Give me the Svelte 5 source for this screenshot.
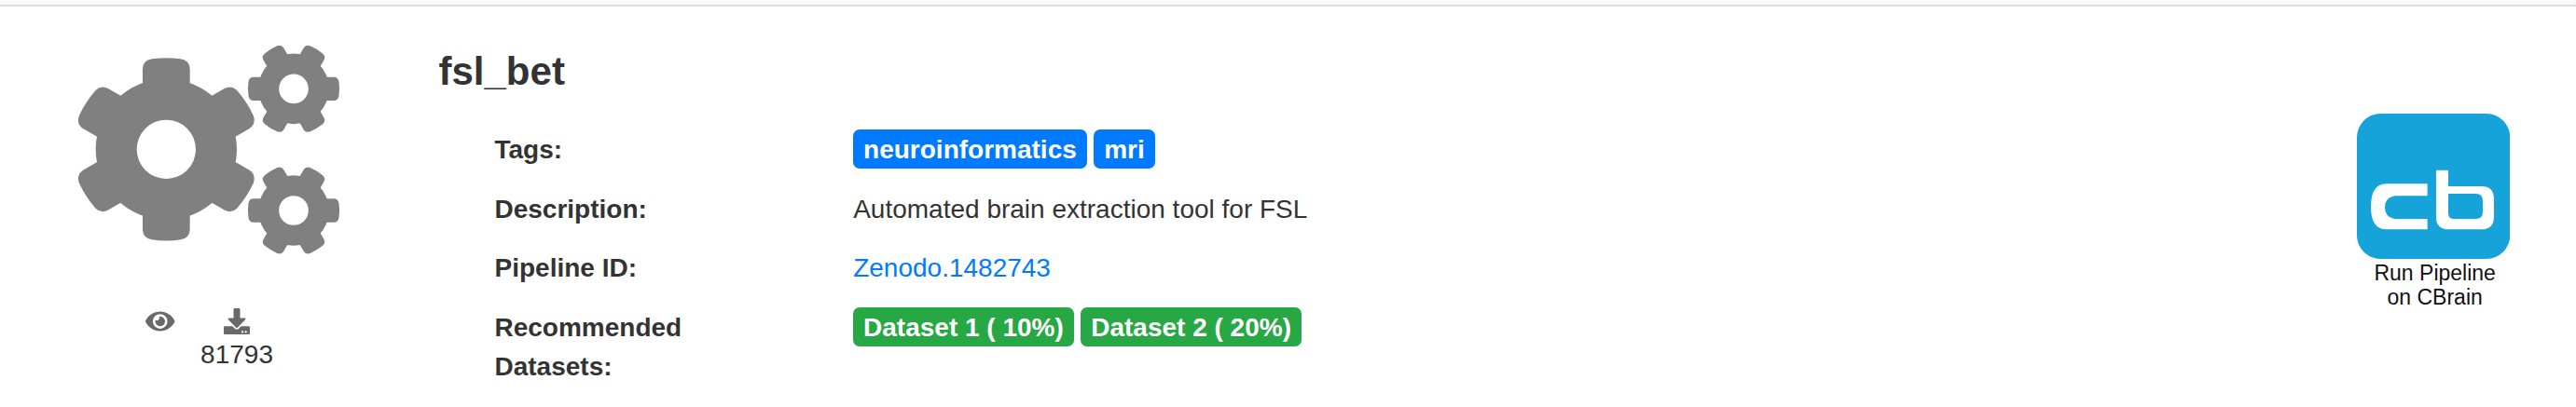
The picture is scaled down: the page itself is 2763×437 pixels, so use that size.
<script>
  const tags = ['neuroinformatics', 'mri'];
  const datasets = ['Dataset 1 ( 10%)', 'Dataset 2 ( 20%)'];
  const uprightTooth = 'M-76-110V-258Q-76-286-46-291Q0-298 46-291Q76-286 76-258V-110z';
  const slantTooth = 'M-76-110V-260Q-76-284-52-292Q0-302 47-297Q75-291 76-264V-110z';
  const smallTooth = 'M-76-110V-258Q-76-284-48-290Q0-297 46-292Q76-286 76-260V-110z';
  const gears = [
    { t: 'translate(355 391)', slant: slantTooth },
    { t: 'translate(765 196) rotate(90) scale(0.5)', slant: smallTooth },
    { t: 'translate(765 588) rotate(90) scale(0.5)', slant: smallTooth }
  ];
</script>

<div class="topbar"></div>
<main class="pipeline">
  <aside class="side">
    <svg class="cogs" viewBox="72 54 843 678" fill="#808080">
      {#each gears as gear}
        <g transform={gear.t}>
          <path fill-rule="evenodd" d="M-227 0a227 227 0 1 0 454 0a227 227 0 1 0-454 0zM-95 0a95 95 0 1 0 190 0a95 95 0 1 0-190 0z" />
          <path d={uprightTooth} />
          <path transform="rotate(180)" d={uprightTooth} />
          <path transform="rotate(60)" d={gear.slant} />
          <path transform="rotate(240)" d={gear.slant} />
          <path transform="rotate(-60) scale(-1 1)" d={gear.slant} />
          <path transform="rotate(120) scale(-1 1)" d={gear.slant} />
        </g>
      {/each}
    </svg>
    <div class="stats">
      <div class="stat">
        <svg viewBox="0 0 576 512"><path d="M572.52 241.4C518.29 135.59 410.93 64 288 64S57.68 135.64 3.48 241.41a32.35 32.35 0 0 0 0 29.19C57.71 376.41 165.07 448 288 448s230.32-71.64 284.52-177.41a32.35 32.35 0 0 0 0-29.19zM288 400a144 144 0 1 1 144-144 143.93 143.93 0 0 1-144 144zm0-240a95.31 95.31 0 0 0-25.31 3.79 47.85 47.85 0 0 1-66.9 66.9A95.78 95.78 0 1 0 288 160z" /></svg>
      </div>
      <div class="stat">
        <svg viewBox="0 0 512 512"><path d="M216 0h80c13.3 0 24 10.7 24 24v168h87.7c17.8 0 26.7 21.5 14.1 34.1L269.7 378.3c-7.5 7.5-19.8 7.5-27.3 0L90.1 226.1c-12.6-12.6-3.7-34.1 14.1-34.1H192V24c0-13.3 10.7-24 24-24zm296 376v112c0 13.3-10.7 24-24 24H24c-13.3 0-24-10.7-24-24V376c0-13.3 10.7-24 24-24h146.7l49 49c20.1 20.1 52.5 20.1 72.6 0l49-49H488c13.3 0 24 10.7 24 24zm-124 88c0-11-9-20-20-20s-20 9-20 20 9 20 20 20 20-9 20-20zm64 0c0-11-9-20-20-20s-20 9-20 20 9 20 20 20 20-9 20-20z" /></svg>
        <span>81793</span>
      </div>
    </div>
  </aside>

  <section class="info">
    <h1>fsl_bet</h1>
    <dl>
      <dt>Tags:</dt>
      <dd>{#each tags as t}<span class="badge primary">{t}</span>{/each}</dd>
      <dt>Description:</dt>
      <dd><span class="text">Automated brain extraction tool for FSL</span></dd>
      <dt>Pipeline ID:</dt>
      <dd><a class="text" href="#zenodo">Zenodo.1482743</a></dd>
      <dt>Recommended Datasets:</dt>
      <dd>{#each datasets as d}<span class="badge success">{d}</span>{/each}</dd>
    </dl>
  </section>

  <a class="run" href="#run">
    <svg viewBox="84 66 493 468">
      <rect x="84" y="66" width="493" height="468" rx="76" fill="#15a3da" />
      <path fill="#fff" d="M311 292V331H206Q174 336 174 368Q174 398 204 405H311V439H179Q129 439 129 366Q129 292 179 292z" />
      <path fill="#fff" fill-rule="evenodd" d="M339 248H378V300H484Q525 300 525 340V398Q525 439 484 439H380Q339 439 339 398zM378 324V386Q378 405 397 405H467Q489 405 489 383V346Q489 324 467 324z" />
    </svg>
    <span>Run Pipeline<br />on CBrain</span>
  </a>
</main>

<style>
  :global(body) {
    margin: 0;
    background: #fff;
    overflow: hidden;
  }
  .topbar {
    height: 5px;
    background: linear-gradient(#fbfbfb, #f7f7f7);
    border-bottom: 2px solid #ddd;
  }
  .pipeline {
    display: flex;
    align-items: flex-start;
    height: 430px;
    color: #333;
    font: 28px/42px "Liberation Sans", Arial, sans-serif;
  }
  .side {
    width: 281px;
    padding: 41px 0 0 84px;
    flex: none;
  }
  .cogs {
    display: block;
    width: 281px;
    height: 226px;
  }
  .stats {
    display: flex;
    margin-top: 57px;
    padding-left: 72px;
    gap: 27.6px;
  }
  .stat {
    display: flex;
    flex-direction: column;
    align-items: center;
  }
  .stat svg {
    display: block;
    height: 28px;
    fill: #696969;
  }
  .stat span {
    padding-top: 1px;
  }
  .info {
    flex: 1;
    padding: 45px 0 0 105.5px;
  }
  h1 {
    margin: 0;
    font-size: 42px;
    line-height: 50px;
  }
  dl {
    display: grid;
    grid-template-columns: 384.4px auto;
    row-gap: 20.7px;
    margin: 37px 0 0;
    padding-left: 60px;
  }
  dt {
    width: 260px;
    padding-top: 1px;
    font-weight: 700;
  }
  dd {
    display: flex;
    align-items: flex-start;
    gap: 7px;
    margin: 0;
  }
  .text {
    padding: 1px 0 0 0.3px;
  }
  .badge {
    padding: 8px 11.2px 6px;
    border-radius: 7px;
    color: #fff;
    font-weight: 700;
    line-height: 28px;
  }
  .primary {
    background: #007bff;
  }
  .success {
    background: #28a745;
  }
  dd a {
    color: #007bff;
    text-decoration: none;
  }
  .run {
    display: flex;
    flex-direction: column;
    align-items: center;
    width: 164.3px;
    margin: 115px 70.7px 0 0;
    color: #111;
    font-size: 23px;
    line-height: 26px;
    text-align: center;
    text-decoration: none;
  }
  .run svg {
    display: block;
    width: 164.3px;
    height: 156px;
  }
  .run span {
    padding: 2px 0 0 3px;
  }
</style>
